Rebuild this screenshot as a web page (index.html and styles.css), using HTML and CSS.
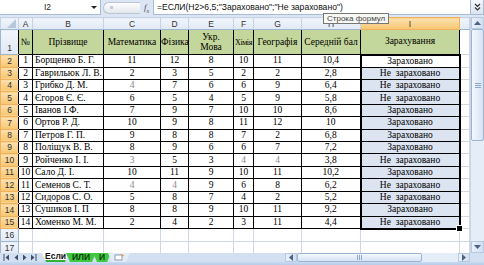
FILE: index.html
```html
<!DOCTYPE html>
<html lang="uk">

<head>
    <meta charset="UTF-8">
    <meta name="viewport" content="width=device-width, initial-scale=1.0">
    <title>Зарахування</title>
    <link rel="stylesheet" href="styles.css">
</head>

<body>
    <div class="window">
        <div class="formula-bar">
            <div class="name-box">
                <span class="cell-ref">I2</span>
                <span class="drop"></span>
            </div>
            <div class="fx-zone">
                <span class="knob"><i></i></span>
                <span class="fx">f<sub>x</sub></span>
            </div>
            <div class="formula">=ЕСЛИ(H2&gt;6,5;"Зараховано";"Не зараховано")</div>
            <div class="expand">
                <svg width="7" height="8" viewBox="0 0 7 8">
                    <path d="M1 1l2.5 2.5L6 1M1 4.5L3.5 7 6 4.5" fill="none" stroke="#333" stroke-width="1.2" />
                </svg>
            </div>
        </div>

        <div class="sheet-area">
            <div class="grid-wrap">
                <table class="grid">
                    <colgroup>
                        <col style="width:18px">
                        <col style="width:14px">
                        <col style="width:71px">
                        <col style="width:57px">
                        <col style="width:28px">
                        <col style="width:45px">
                        <col style="width:20px">
                        <col style="width:48px">
                        <col style="width:59px">
                        <col style="width:99px">
                        <col>
                    </colgroup>
                    <tr class="col-heads">
                        <th class="corner"><span></span></th>
                        <th>A</th><th>B</th><th>C</th><th>D</th><th>E</th><th>F</th><th>G</th><th>H</th>
                        <th class="sel">I</th><th></th>
                    </tr>
                    <tr class="title-row">
                        <th class="row-num">1</th>
                        <td class="green">№</td>
                        <td class="green">Прізвище</td>
                        <td class="green">Математика</td>
                        <td class="green">Фізика</td>
                        <td class="green two-line">Укр.<br>Мова</td>
                        <td class="green tight">Хімія</td>
                        <td class="green">Географія</td>
                        <td class="green">Середній бал</td>
                        <td class="green">Зарахування</td>
                        <td class="empty"></td>
                    </tr>
                    <tr>
                        <th class="row-num sel">2</th>
                        <td>1</td><td class="name">Борщенко Б. Г.</td>
                        <td>11</td><td>12</td><td>8</td><td>10</td><td>11</td><td>10,4</td>
                        <td class="result active">Зараховано</td><td class="empty"></td>
                    </tr>
                    <tr>
                        <th class="row-num sel">3</th>
                        <td>2</td><td class="name">Гаврильюк Л. В.</td>
                        <td>2</td><td>3</td><td>5</td><td>2</td><td>2</td><td>2,8</td>
                        <td class="result">Не&nbsp; зараховано</td><td class="empty"></td>
                    </tr>
                    <tr>
                        <th class="row-num sel">4</th>
                        <td>3</td><td class="name">Грибко Д. М.</td>
                        <td class="low">4</td><td>7</td><td>6</td><td>6</td><td>9</td><td>6,4</td>
                        <td class="result">Не&nbsp; зараховано</td><td class="empty"></td>
                    </tr>
                    <tr>
                        <th class="row-num sel">5</th>
                        <td>4</td><td class="name">Єгоров Є. Є.</td>
                        <td>6</td><td>5</td><td>4</td><td>5</td><td>9</td><td>5,8</td>
                        <td class="result">Не&nbsp; зараховано</td><td class="empty"></td>
                    </tr>
                    <tr>
                        <th class="row-num sel">6</th>
                        <td>5</td><td class="name">Іванов І.Ф.</td>
                        <td>7</td><td>9</td><td>7</td><td>10</td><td>10</td><td>8,6</td>
                        <td class="result">Зараховано</td><td class="empty"></td>
                    </tr>
                    <tr>
                        <th class="row-num sel">7</th>
                        <td>6</td><td class="name">Ортов Р. Д.</td>
                        <td>10</td><td>9</td><td>8</td><td>11</td><td>12</td><td>10</td>
                        <td class="result">Зараховано</td><td class="empty"></td>
                    </tr>
                    <tr>
                        <th class="row-num sel">8</th>
                        <td>7</td><td class="name">Петров Г. П.</td>
                        <td>9</td><td>8</td><td>8</td><td>7</td><td>2</td><td>6,8</td>
                        <td class="result">Зараховано</td><td class="empty"></td>
                    </tr>
                    <tr>
                        <th class="row-num sel">9</th>
                        <td>8</td><td class="name">Поліщук В. В.</td>
                        <td>8</td><td>9</td><td>6</td><td>6</td><td>7</td><td>7,2</td>
                        <td class="result">Зараховано</td><td class="empty"></td>
                    </tr>
                    <tr>
                        <th class="row-num sel">10</th>
                        <td>9</td><td class="name">Ройченко І. І.</td>
                        <td class="low">3</td><td>5</td><td>3</td><td class="low">4</td><td class="low">4</td><td>3,8</td>
                        <td class="result">Не&nbsp; зараховано</td><td class="empty"></td>
                    </tr>
                    <tr>
                        <th class="row-num sel">11</th>
                        <td>10</td><td class="name">Сало Д. І.</td>
                        <td>10</td><td>11</td><td>9</td><td>10</td><td>11</td><td>10,2</td>
                        <td class="result">Зараховано</td><td class="empty"></td>
                    </tr>
                    <tr>
                        <th class="row-num sel">12</th>
                        <td>11</td><td class="name">Семенов С. Т.</td>
                        <td class="low">4</td><td class="low">4</td><td>9</td><td>6</td><td>8</td><td>6,2</td>
                        <td class="result">Не&nbsp; зараховано</td><td class="empty"></td>
                    </tr>
                    <tr>
                        <th class="row-num sel">13</th>
                        <td>12</td><td class="name">Сидоров С. О.</td>
                        <td>5</td><td>8</td><td>7</td><td>4</td><td>2</td><td>5,2</td>
                        <td class="result">Не&nbsp; зараховано</td><td class="empty"></td>
                    </tr>
                    <tr>
                        <th class="row-num sel">14</th>
                        <td>13</td><td class="name">Сушиков І. П</td>
                        <td>8</td><td>8</td><td>9</td><td>10</td><td>11</td><td>9,2</td>
                        <td class="result">Зараховано</td><td class="empty"></td>
                    </tr>
                    <tr>
                        <th class="row-num sel">15</th>
                        <td>14</td><td class="name">Хоменко М. М.</td>
                        <td>2</td><td>4</td><td>2</td><td>3</td><td>11</td><td>4,4</td>
                        <td class="result last">Не&nbsp; зараховано</td><td class="empty"></td>
                    </tr>
                    <tr class="blank">
                        <th class="row-num">16</th>
                        <td class="empty"></td><td class="empty"></td><td class="empty"></td><td class="empty"></td>
                        <td class="empty"></td><td class="empty"></td><td class="empty"></td><td class="empty"></td>
                        <td class="empty"></td><td class="empty"></td>
                    </tr>
                    <tr class="blank">
                        <th class="row-num">17</th>
                        <td class="empty"></td><td class="empty"></td><td class="empty"></td><td class="empty"></td>
                        <td class="empty"></td><td class="empty"></td><td class="empty"></td><td class="empty"></td>
                        <td class="empty"></td><td class="empty"></td>
                    </tr>
                </table>
            </div>
            <div class="vscroll">
                <div class="sb-btn">
                    <svg width="7" height="4" viewBox="0 0 7 4"><path d="M0 4L3.5 0 7 4z" fill="#4d6185" /></svg>
                </div>
                <div class="v-thumb"><i></i><i></i><i></i></div>
                <div class="v-track"></div>
                <div class="sb-btn">
                    <svg width="7" height="4" viewBox="0 0 7 4"><path d="M0 0l3.5 4L7 0z" fill="#4d6185" /></svg>
                </div>
            </div>
        </div>

        <div class="bottom-bar">
            <div class="tab-nav">
                <svg width="36" height="7" viewBox="0 0 36 7">
                    <path d="M1 0v7" stroke="#3e4f6b" />
                    <path d="M6 0.5L2.5 3.5 6 6.5z M15 0.5L11.5 3.5 15 6.5z M20 0.5L23.5 3.5 20 6.5z M28 0.5L31.5 3.5 28 6.5z" fill="#3e4f6b" />
                    <path d="M33 0v7" stroke="#3e4f6b" />
                </svg>
            </div>
            <div class="tabs">
                <span class="tab current">Если</span>
                <span class="tab green-tab">ИЛИ</span>
                <span class="tab green-tab">И</span>
                <span class="tab new-tab">
                    <svg width="12" height="7" viewBox="0 0 12 7">
                        <rect x="2" y="1" width="7" height="5" fill="#fff" stroke="#8c9db5" />
                        <path d="M8 0l1 1.5 1.5-.5-1 1.5" stroke="#e0a030" fill="none" />
                    </svg>
                </span>
            </div>
            <div class="hscroll">
                <div class="sb-btn h">
                    <svg width="4" height="7" viewBox="0 0 4 7"><path d="M4 0L0 3.5 4 7z" fill="#4d6185" /></svg>
                </div>
                <div class="h-thumb"><i></i><i></i><i></i></div>
                <div class="h-track"></div>
                <div class="sb-btn h">
                    <svg width="4" height="7" viewBox="0 0 4 7"><path d="M0 0l4 3.5L0 7z" fill="#4d6185" /></svg>
                </div>
            </div>
            <div class="corner-box"></div>
        </div>
        <div class="status"></div>

        <div class="tip">Строка формул</div>
    </div>
</body>

</html>
```

FILE: styles.css
```css
* {
    margin: 0;
    padding: 0;
    box-sizing: border-box;
}

body {
    overflow: hidden;
    background: #fff;
    font-family: "Liberation Sans", Arial, sans-serif;
}

.window {
    position: relative;
    width: 484px;
    height: 265px;
    display: flex;
    flex-direction: column;
}

/* formula bar */
.formula-bar {
    height: 17px;
    flex: none;
    display: flex;
    background: #dbe5f3;
    padding-bottom: 2px;
}

.name-box {
    width: 101px;
    display: flex;
    align-items: center;
    background: #fff;
    border-right: 1px solid #a8bbd4;
    border-bottom: 1px solid #a8bbd4;
}

.cell-ref {
    flex: 1;
    text-align: center;
    font-size: 8.5px;
    color: #222;
    padding-left: 4px;
}

.drop {
    width: 0;
    height: 0;
    margin-right: 3px;
    border-left: 3px solid transparent;
    border-right: 3px solid transparent;
    border-top: 3px solid #222;
}

.fx-zone {
    width: 52px;
    display: flex;
    align-items: center;
    padding-left: 2px;
}

.knob {
    width: 37px;
    height: 12px;
    border: 1px solid #b9c6d6;
    border-right: none;
    border-radius: 7px 0 0 7px;
    background: linear-gradient(#fdfdfd, #e3e7ec);
    display: flex;
    align-items: center;
}

.knob i {
    width: 3px;
    height: 3px;
    margin-left: 6px;
    background: #c5ccd5;
}

.fx {
    margin-left: 4px;
    font-family: "Liberation Serif", serif;
    font-style: italic;
    font-size: 9px;
    color: #555;
}

.fx sub {
    font-size: 6px;
}

.formula {
    flex: 1;
    background: #fff;
    border-left: 1px solid #a8bbd4;
    border-bottom: 1px solid #a8bbd4;
    font-size: 8.6px;
    color: #111;
    line-height: 14px;
    padding-left: 3px;
    white-space: nowrap;
}

.expand {
    width: 14px;
    display: flex;
    align-items: center;
    justify-content: center;
    background: linear-gradient(#f4f7fb, #dbe4f0);
    border: 1px solid #a8bbd4;
    border-top: none;
}

/* sheet */
.sheet-area {
    height: 236px;
    flex: none;
    display: flex;
}

.grid-wrap {
    width: 470px;
    overflow: hidden;
}

.grid {
    width: 470px;
    table-layout: fixed;
    border-collapse: collapse;
    font-family: "Liberation Serif", "Times New Roman", serif;
    font-size: 9.5px;
    color: #000;
}

.grid td {
    border: 1px solid #000;
    text-align: center;
    padding: 0;
    white-space: nowrap;
    overflow: hidden;
    line-height: 11px;
}

.grid th {
    font-family: "Liberation Sans", Arial, sans-serif;
    font-weight: normal;
    font-size: 8.5px;
    color: #333;
    border: 1px solid #9eb6ce;
    background: linear-gradient(#f1f5fb, #e1e9f5);
    padding: 0;
}

.col-heads th {
    height: 12px;
    border-color: #c4d3e5 #c4d3e5 #9eb6ce;
}

.col-heads th.sel,
.row-num.sel {
    background: linear-gradient(#fbe1b0, #f6c66f);
    border-color: #f1b05e;
}

.corner {
    position: relative;
}

.corner span {
    position: absolute;
    right: 2px;
    bottom: 1px;
    border-left: 9px solid transparent;
    border-bottom: 9px solid #b7c8dc;
}

.row-num {
    text-align: center;
    vertical-align: bottom;
    line-height: 11px;
}

.title-row td,
.title-row th {
    height: 25px;
}

.grid tr:not(.col-heads):not(.title-row):not(.blank) td,
.grid tr:not(.col-heads):not(.title-row):not(.blank) th {
    height: 12.43px;
}

.blank th,
.blank td {
    height: 13px;
}

.title-row th,
.sel.row-num {
    border-right-color: #000;
}

.green {
    background: #c3d69b;
}

.two-line {
    line-height: 10px !important;
}

.grid td.tight {
    text-align: left;
    font-size: 8px;
    letter-spacing: -0.4px;
    padding-left: 1px;
}

.name {
    text-align: left !important;
    padding-left: 2px !important;
}

.low {
    color: #8a8a8a;
}

.result {
    background: #dce4f1;
    border-left: 2px solid #000 !important;
    border-right: 2px solid #000 !important;
}

.result.active {
    background: #fff;
    border-top: 2px solid #000 !important;
}

.result.last {
    position: relative;
    border-bottom: 2px solid #000 !important;
    overflow: visible;
}

.result.last::after {
    content: "";
    position: absolute;
    right: -4px;
    bottom: -4px;
    width: 5px;
    height: 5px;
    background: #000;
    border: 1px solid #fff;
}

.grid td.empty {
    border-color: #d0d7e5;
}

.tip {
    position: absolute;
    left: 323px;
    top: 13px;
    padding: 0 3px;
    height: 11px;
    line-height: 9px;
    font-size: 8px;
    color: #444;
    background: #f8f8f4;
    border: 1px solid #767676;
    white-space: nowrap;
}

/* scrollbars */
.vscroll {
    width: 14px;
    display: flex;
    flex-direction: column;
    background: #e5edf8;
    border-left: 1px solid #c8d6e8;
}

.sb-btn {
    height: 12px;
    flex: none;
    display: flex;
    align-items: center;
    justify-content: center;
    background: linear-gradient(90deg, #e9f0fa, #d3dfef);
    border: 1px solid #b8cae2;
}

.v-thumb {
    height: 112px;
    flex: none;
    display: flex;
    flex-direction: column;
    align-items: center;
    justify-content: center;
    gap: 1px;
    background: linear-gradient(90deg, #f4f8fd, #d6e3f3);
    border: 1px solid #9cb3d3;
    border-radius: 2px;
}

.v-thumb i {
    width: 6px;
    height: 1px;
    background: #8ea6c8;
}

.v-track {
    flex: 1;
}

.bottom-bar {
    height: 9px;
    flex: none;
    display: flex;
    align-items: stretch;
    background: #d3e0f1;
}

.tab-nav {
    width: 42px;
    display: flex;
    align-items: center;
    padding-left: 3px;
}

.tabs {
    width: 243px;
    display: flex;
    align-items: stretch;
}

.tab {
    display: flex;
    align-items: center;
    justify-content: center;
    font-size: 8.5px;
    font-weight: bold;
    line-height: 9px;
    clip-path: polygon(0 0, 100% 0, calc(100% - 4px) 100%, 4px 100%);
}

.tab.current {
    width: 27px;
    background: #fff;
    color: #111;
    border-bottom: 2px solid #35b235;
}

.green-tab {
    background: #41c841;
    color: #0d3d0d;
    margin-left: -3px;
}

.green-tab:nth-child(2) {
    width: 30px;
}

.green-tab:nth-child(3) {
    width: 18px;
}

.new-tab {
    width: 22px;
    margin-left: -3px;
    background: #e4ecf7;
}

.hscroll {
    flex: 1;
    display: flex;
    background: #e5edf8;
}

.sb-btn.h {
    width: 12px;
    height: auto;
}

.h-thumb {
    width: 125px;
    display: flex;
    align-items: center;
    justify-content: center;
    gap: 1px;
    background: linear-gradient(#f4f8fd, #d6e3f3);
    border: 1px solid #9cb3d3;
    border-radius: 2px;
}

.h-thumb i {
    width: 1px;
    height: 5px;
    background: #8ea6c8;
}

.h-track {
    flex: 1;
}

.corner-box {
    width: 14px;
    background: #d3e0f1;
}

.status {
    flex: 1;
    background: linear-gradient(#c9daf0, #b7cce8);
}
```
